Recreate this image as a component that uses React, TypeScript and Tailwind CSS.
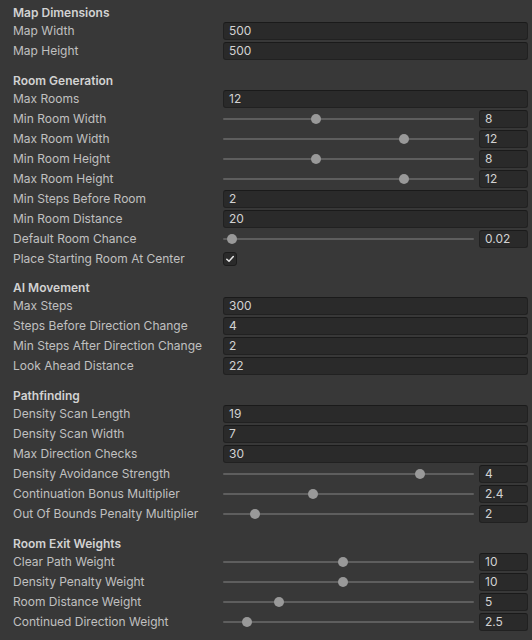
import React from "react";

type Field =
  | { kind: "int"; label: string; value: string }
  | { kind: "slider"; label: string; value: string; thumb: number }
  | { kind: "toggle"; label: string; checked: boolean };

type Section = { title: string; fields: Field[] };

// thumb = centre of the knob, in px from the left end of the track
const sections: Section[] = [
  {
    title: "Map Dimensions",
    fields: [
      { kind: "int", label: "Map Width", value: "500" },
      { kind: "int", label: "Map Height", value: "500" },
    ],
  },
  {
    title: "Room Generation",
    fields: [
      { kind: "int", label: "Max Rooms", value: "12" },
      { kind: "slider", label: "Min Room Width", value: "8", thumb: 93 },
      { kind: "slider", label: "Max Room Width", value: "12", thumb: 181 },
      { kind: "slider", label: "Min Room Height", value: "8", thumb: 93 },
      { kind: "slider", label: "Max Room Height", value: "12", thumb: 181 },
      { kind: "int", label: "Min Steps Before Room", value: "2" },
      { kind: "int", label: "Min Room Distance", value: "20" },
      { kind: "slider", label: "Default Room Chance", value: "0.02", thumb: 9 },
      { kind: "toggle", label: "Place Starting Room At Center", checked: true },
    ],
  },
  {
    title: "AI Movement",
    fields: [
      { kind: "int", label: "Max Steps", value: "300" },
      { kind: "int", label: "Steps Before Direction Change", value: "4" },
      { kind: "int", label: "Min Steps After Direction Change", value: "2" },
      { kind: "int", label: "Look Ahead Distance", value: "22" },
    ],
  },
  {
    title: "Pathfinding",
    fields: [
      { kind: "int", label: "Density Scan Length", value: "19" },
      { kind: "int", label: "Density Scan Width", value: "7" },
      { kind: "int", label: "Max Direction Checks", value: "30" },
      { kind: "slider", label: "Density Avoidance Strength", value: "4", thumb: 197 },
      { kind: "slider", label: "Continuation Bonus Multiplier", value: "2.4", thumb: 90 },
      { kind: "slider", label: "Out Of Bounds Penalty Multiplier", value: "2", thumb: 32 },
    ],
  },
  {
    title: "Room Exit Weights",
    fields: [
      { kind: "slider", label: "Clear Path Weight", value: "10", thumb: 120 },
      { kind: "slider", label: "Density Penalty Weight", value: "10", thumb: 120 },
      { kind: "slider", label: "Room Distance Weight", value: "5", thumb: 56 },
      { kind: "slider", label: "Continued Direction Weight", value: "2.5", thumb: 24 },
    ],
  },
];

function NumberBox({ value, className = "" }: { value: string; className?: string }) {
  return (
    <div
      className={`h-[18px] flex items-center pl-[5px] rounded-[3px] bg-[#2a2a2a] border border-[#212121] border-t-[#1a1a1a] text-[12px] text-[#d2d2d2] leading-none ${className}`}
    >
      {value}
    </div>
  );
}

function Row({ field }: { field: Field }) {
  const tall = field.kind === "toggle" ? "h-[19px]" : "h-[20px]";
  return (
    <div className={`flex items-center ${tall}`}>
      <div className="w-[210px] shrink-0 text-[12px] text-[#c0c0c0] leading-none whitespace-nowrap">
        {field.label}
      </div>
      <div className="flex-1 flex items-center min-w-0">
        {field.kind === "int" && <NumberBox value={field.value} className="flex-1" />}
        {field.kind === "slider" && (
          <>
            <div className="relative w-[251px] h-[18px] shrink-0 flex items-center">
              <div className="w-full h-[2px] bg-[#5e5e5e] rounded-full" />
              <div
                className="absolute top-[4px] w-[10px] h-[10px] rounded-full bg-[#999999]"
                style={{ left: field.thumb - 5 }}
              />
            </div>
            <NumberBox value={field.value} className="ml-[5px] flex-1" />
          </>
        )}
        {field.kind === "toggle" && (
          <div className="w-[14px] h-[14px] rounded-[3px] bg-[#2a2a2a] border border-[#1c1c1c] flex items-center justify-center">
            {field.checked && (
              <svg width="10" height="10" viewBox="0 0 10 10" fill="none">
                <path
                  d="M1.8 5.2 L4 7.3 L8.3 2.6"
                  stroke="#e6e6e6"
                  strokeWidth="1.5"
                  strokeLinecap="round"
                  strokeLinejoin="round"
                />
              </svg>
            )}
          </div>
        )}
      </div>
    </div>
  );
}

export default function App() {
  return (
    <div
      className="w-[532px] h-[640px] bg-[#383838] pt-[5px] pl-[13px] pr-[4px] overflow-hidden"
      style={{ fontFamily: "Inter, 'Noto Sans', sans-serif" }}
    >
      {sections.map((s, i) => (
        <div key={s.title} className={i === 0 ? "" : "mt-[12px]"}>
          <div className="h-[16px] flex items-center text-[12px] font-semibold text-[#d2d2d2] leading-none">
            {s.title}
          </div>
          {s.fields.map((f) => (
            <Row key={f.label} field={f} />
          ))}
        </div>
      ))}
    </div>
  );
}
